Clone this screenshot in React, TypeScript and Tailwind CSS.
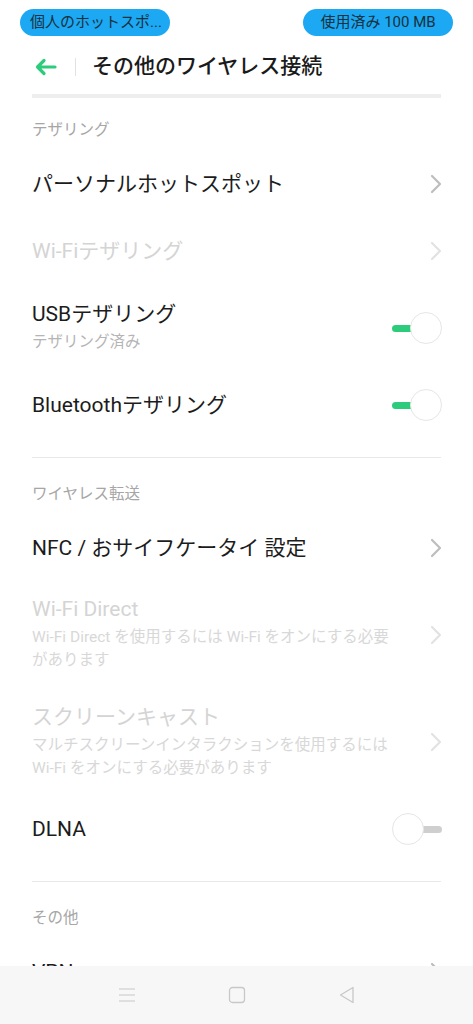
import React from 'react';

const font = { fontFamily: 'Roboto, "Noto Sans CJK JP", sans-serif' };

const Chevron: React.FC<{ faded?: boolean }> = ({ faded }) => (
  <svg width="14" height="22" viewBox="0 0 14 22" className={faded ? 'text-[#e2e2e2]' : 'text-[#bdbdbd]'}>
    <path d="M3 3 L11 11 L3 19" fill="none" stroke="currentColor" strokeWidth="2.2" strokeLinecap="round" strokeLinejoin="round" />
  </svg>
);

const Toggle: React.FC<{ on: boolean }> = ({ on }) => (
  <div className="relative w-[50px] h-[32px] flex items-center">
    {on ? (
      <>
        <div className="absolute left-0 w-[22px] h-[7px] rounded-full bg-[#2dcc7c]" />
        <div className="absolute right-0 w-[32px] h-[32px] rounded-full bg-white border border-[#e6e6e6]" />
      </>
    ) : (
      <>
        <div className="absolute right-0 w-[22px] h-[7px] rounded-full bg-[#cfcfcf]" />
        <div className="absolute left-0 w-[32px] h-[32px] rounded-full bg-white border border-[#e6e6e6]" />
      </>
    )}
  </div>
);

const SectionHeader: React.FC<{ label: string; first?: boolean }> = ({ label, first }) => (
  <div className={`px-[32px] text-[15.5px] leading-[20px] text-[#a6a6a6] ${first ? 'h-[52px] pt-[22px]' : 'h-[56px] pt-[26px]'}`}>
    {label}
  </div>
);

type RowProps = {
  title: string;
  sub?: React.ReactNode;
  disabled?: boolean;
  right: 'chevron' | 'on' | 'off';
  h: string;
};

const Row: React.FC<RowProps> = ({ title, sub, disabled, right, h }) => (
  <div className={`flex items-center justify-between pl-[32px] pr-[32px] ${h}`}>
    <div className="w-[380px]">
      <div className={`text-[21px] leading-[24px] ${disabled ? 'text-[#d4d4d4]' : 'text-[#1c1c1c]'}`}>{title}</div>
      {sub && (
        <div className={`mt-[5px] text-[15.5px] leading-[23px] ${disabled ? 'text-[#d8d8d8]' : 'text-[#b5b5b5]'}`}>{sub}</div>
      )}
    </div>
    {right === 'chevron' ? (
      <div className="-mr-[2px]"><Chevron faded={disabled} /></div>
    ) : (
      <div className="-mr-[1px]"><Toggle on={right === 'on'} /></div>
    )}
  </div>
);

const Divider: React.FC = () => <div className="mx-[32px] mt-[19px] h-px bg-[#e8e8e8]" />;

export default function App() {
  return (
    <div className="w-[473px] h-[1024px] bg-white flex flex-col overflow-hidden" style={font}>
      <div className="flex-1 overflow-hidden">
        {/* status pills */}
        <div className="h-[45px] pt-[9px] px-[20px] flex justify-between">
          <div className="w-[150px] h-[27px] rounded-full bg-[#1ca8f2] flex items-center pl-[10px] text-[15px] text-[#17313f] whitespace-nowrap overflow-hidden">
            個人のホットスポ...
          </div>
          <div className="w-[150px] h-[27px] rounded-full bg-[#1ca8f2] flex items-center justify-center text-[15px] text-[#17313f] whitespace-nowrap">
            使用済み 100 MB
          </div>
        </div>

        {/* header */}
        <div className="h-[44px] flex items-center pl-[34px]">
          <svg width="23" height="18" viewBox="0 0 23 18" className="text-[#2dcc7c]">
            <path d="M21 9 H3.5 M10 2.5 L3.5 9 L10 15.5" fill="none" stroke="currentColor" strokeWidth="3.2" strokeLinecap="round" strokeLinejoin="round" />
          </svg>
          <div className="ml-[18px] w-px h-[18px] bg-[#e2e2e2]" />
          <div className="ml-[16px] text-[21px] font-medium text-[#1a1a1a]">その他のワイヤレス接続</div>
        </div>

        <div className="mx-[32px] mt-[5px] h-[4px] bg-[#eeeeee]" />

        <SectionHeader label="テザリング" first />
        <Row title="パーソナルホットスポット" right="chevron" h="h-[67px]" />
        <Row title="Wi-Fiテザリング" right="chevron" disabled h="h-[67px]" />
        <Row title="USBテザリング" sub="テザリング済み" right="on" h="h-[88px]" />
        <Row title="Bluetoothテザリング" right="on" h="h-[66px]" />

        <Divider />
        <SectionHeader label="ワイヤレス転送" />
        <Row title="NFC / おサイフケータイ 設定" right="chevron" h="h-[67px]" />
        <Row
          title="Wi-Fi Direct"
          sub={<>Wi-Fi Direct を使用するには Wi-Fi をオンにする必要<br />があります</>}
          right="chevron"
          disabled
          h="h-[107px]"
        />
        <Row
          title="スクリーンキャスト"
          sub={<>マルチスクリーンインタラクションを使用するには<br />Wi-Fi をオンにする必要があります</>}
          right="chevron"
          disabled
          h="h-[108px]"
        />
        <Row title="DLNA" right="off" h="h-[66px]" />

        <Divider />
        <SectionHeader label="その他" />
        <Row title="VPN" right="chevron" h="h-[67px]" />
      </div>

      {/* nav bar */}
      <div className="h-[58px] bg-[#f7f7f7] flex items-center justify-center gap-[90px] text-[#c8c8c8]">
        <svg width="20" height="16" viewBox="0 0 20 16">
          <path d="M2 2 H18 M2 8 H18 M2 14 H18" stroke="currentColor" strokeWidth="1.2" />
        </svg>
        <svg width="20" height="20" viewBox="0 0 20 20">
          <rect x="2.5" y="2.5" width="15" height="15" rx="3" fill="none" stroke="currentColor" strokeWidth="1.3" />
        </svg>
        <svg width="20" height="20" viewBox="0 0 20 20">
          <path d="M16 2.5 L3.5 10 L16 17.5 Z" fill="none" stroke="currentColor" strokeWidth="1.3" strokeLinejoin="round" />
        </svg>
      </div>
    </div>
  );
}
